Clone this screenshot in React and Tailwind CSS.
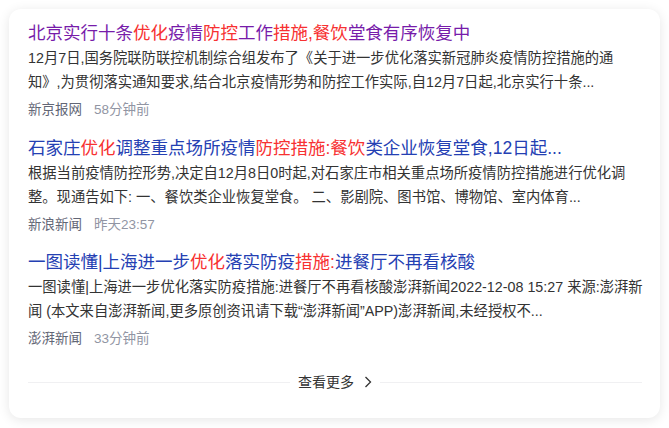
import React from "react";

const R = ({ children }) => <span className="text-[#f73131]">{children}</span>;

function Item({ title, titleColor, lines, source, time, mb }) {
  return (
    <div className={mb}>
      <div className={`text-[17.5px] leading-[26px] whitespace-nowrap ${titleColor}`}>{title}</div>
      <div className="text-[14.3px] leading-[24px] text-[#333] whitespace-nowrap">
        {lines.map((l, i) => (
          <div key={i}>{l}</div>
        ))}
      </div>
      <div className="mt-[6px] flex items-center gap-[12px] text-[13.5px] leading-[20px] whitespace-nowrap">
        <span className="text-[#626675]">{source}</span>
        <span className="text-[#9195a3]">{time}</span>
      </div>
    </div>
  );
}

export default function App() {
  return (
    <div
      className="w-[669px] h-[428px] bg-white p-[9px] pr-[9px]"
      style={{ fontFamily: '"Liberation Sans", "Noto Sans CJK SC", sans-serif' }}
    >
      <div className="w-[651px] h-[409px] rounded-[12px] bg-white shadow-[0_2px_12px_0_rgba(0,0,0,0.1)] pl-[19px] pr-[18px] pt-[11px]">
        <Item
          mb="mb-[15px]"
          titleColor="text-[#771caa]"
          title={
            <>
              北京实行十条<R>优化</R>疫情<R>防控</R>工作<R>措施,餐饮</R>堂食有序恢复中
            </>
          }
          lines={[
            "12月7日,国务院联防联控机制综合组发布了《关于进一步优化落实新冠肺炎疫情防控措施的通",
            "知》,为贯彻落实通知要求,结合北京疫情形势和防控工作实际,自12月7日起,北京实行十条...",
          ]}
          source="新京报网"
          time="58分钟前"
        />
        <Item
          mb="mb-[14px]"
          titleColor="text-[#2440b3]"
          title={
            <>
              石家庄<R>优化</R>调整重点场所疫情<R>防控措施:餐饮</R>类企业恢复堂食,12日起...
            </>
          }
          lines={[
            "根据当前疫情防控形势,决定自12月8日0时起,对石家庄市相关重点场所疫情防控措施进行优化调",
            "整。现通告如下: 一、餐饮类企业恢复堂食。 二、影剧院、图书馆、博物馆、室内体育...",
          ]}
          source="新浪新闻"
          time="昨天23:57"
        />
        <Item
          mb="mb-[23px]"
          titleColor="text-[#2440b3]"
          title={
            <>
              一图读懂|上海进一步<R>优化</R>落实防疫<R>措施:</R>进餐厅不再看核酸
            </>
          }
          lines={[
            "一图读懂|上海进一步优化落实防疫措施:进餐厅不再看核酸澎湃新闻2022-12-08 15:27 来源:澎湃新",
            "闻 (本文来自澎湃新闻,更多原创资讯请下载\u201C澎湃新闻\u201DAPP)澎湃新闻,未经授权不...",
          ]}
          source="澎湃新闻"
          time="33分钟前"
        />
        <div className="flex items-center h-[20px]">
          <div className="flex-1 h-px bg-[#f0f0f2]" />
          <div className="flex items-center px-[8px] text-[14px] text-[#333] gap-[10px]">
            <span>查看更多</span>
            <svg width="8" height="12" viewBox="0 0 8 12" fill="none">
              <polyline points="1.5,1 6.5,6 1.5,11" stroke="#333" strokeWidth="1.3" />
            </svg>
          </div>
          <div className="flex-1 h-px bg-[#f0f0f2]" />
        </div>
      </div>
    </div>
  );
}
